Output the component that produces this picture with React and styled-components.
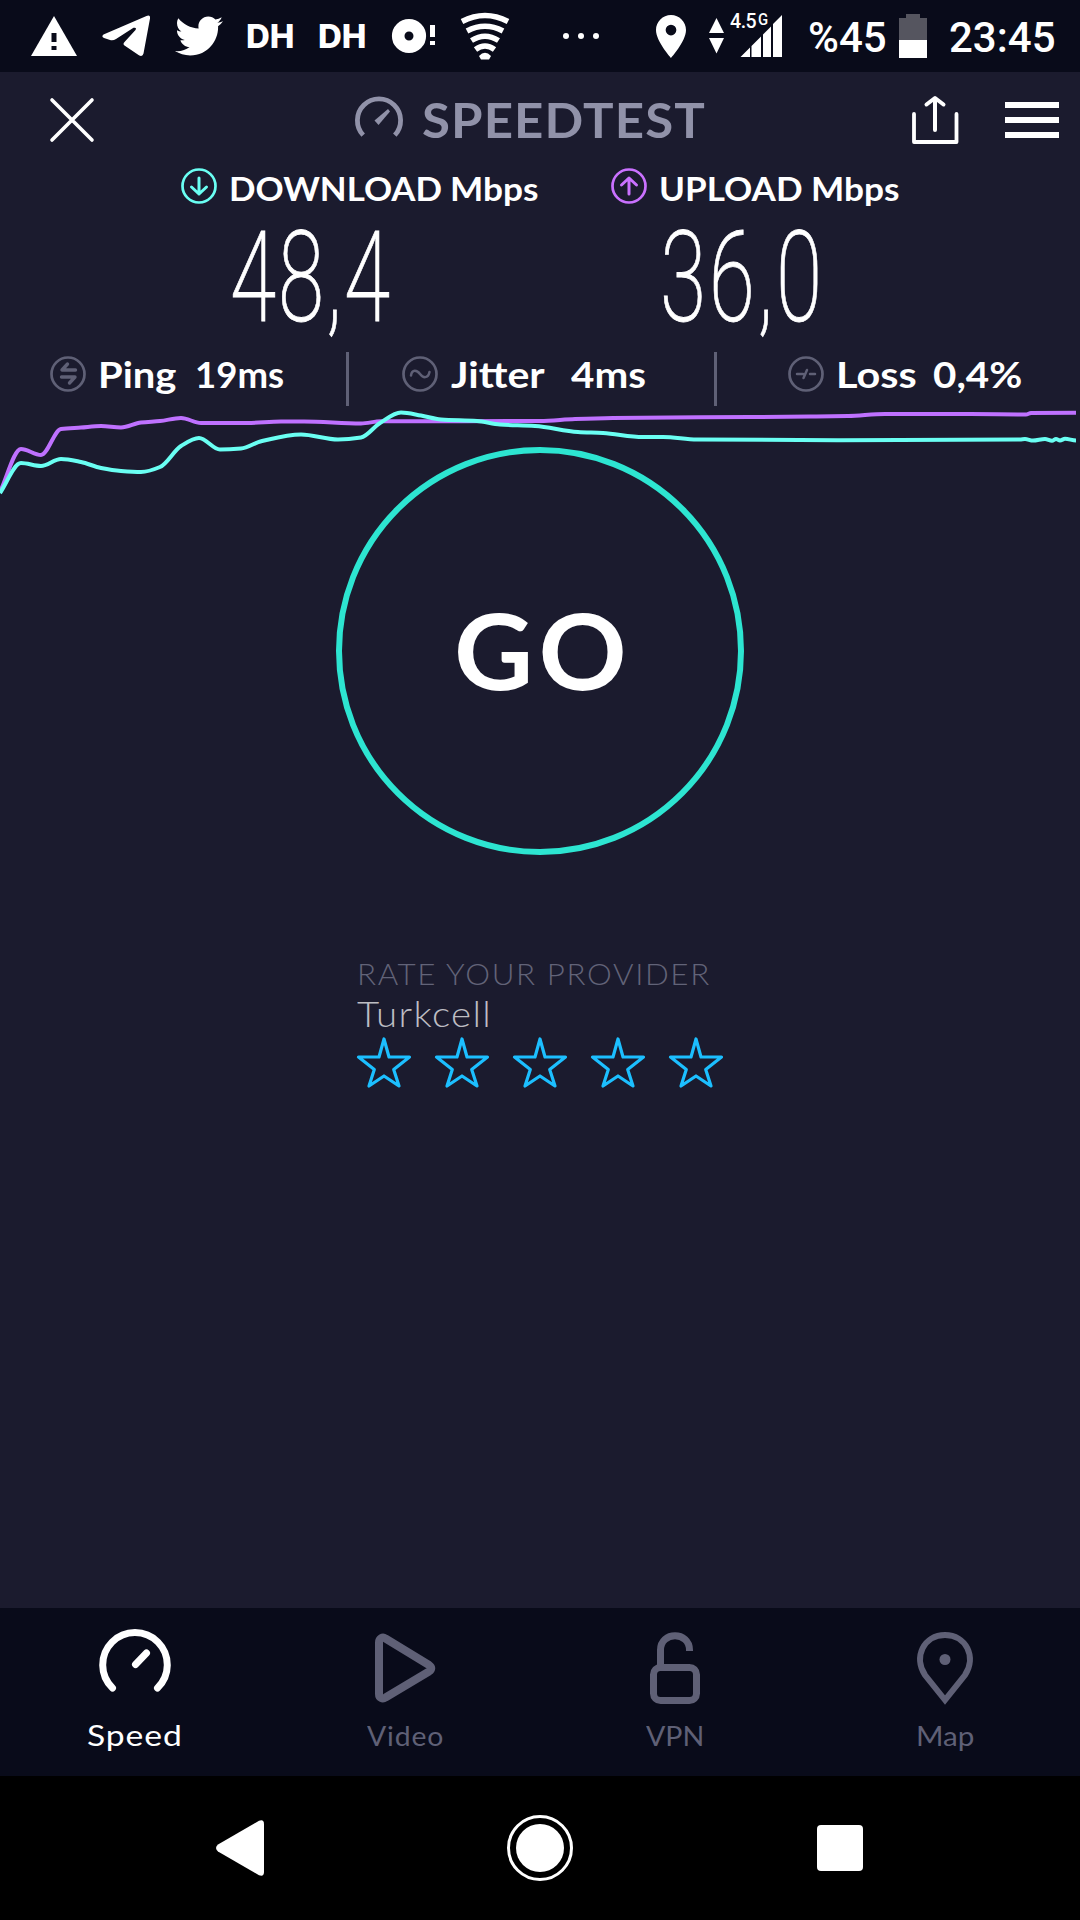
import React from 'react';
import styled, { createGlobalStyle } from 'styled-components';
import { FaTwitter } from 'react-icons/fa';

const GlobalStyle = createGlobalStyle`
  * { box-sizing: border-box; }
  body { margin: 0; background: #1b1b2e; }
  svg { display: block; flex: none; overflow: visible; }
`

const Screen = styled.div`
  width: 1080px;
  height: 1920px;
  display: flex;
  flex-direction: column;
  background: #1b1b2e;
  color: #fff;
  font-family: Lato, "Open Sans", sans-serif;
  overflow: hidden;
`

const StatusBar = styled.div`
  height: 72px;
  display: flex;
  align-items: center;
  background: #090b1a;
  font-family: Roboto, sans-serif;
`

const Slot = styled.div`
  flex: none;
  width: ${p => p.$w}px;
  margin-left: ${p => p.$gap || 0}px;
`

// one line of text, stretched sideways from its left edge; $w is the width after stretching
const Text = styled.span`
  display: block;
  flex: none;
  width: ${p => p.$w / (p.$sx || 1)}px;
  margin-left: ${p => p.$gap || 0}px;
  margin-right: ${p => p.$w - p.$w / (p.$sx || 1)}px;
  padding-top: ${p => p.$drop || 0}px;
  font-size: ${p => p.$size}px;
  line-height: ${p => p.$line || p.$size}px;
  font-weight: ${p => p.$weight || 400};
  letter-spacing: ${p => p.$ls || 0}px;
  color: ${p => p.$color || '#fff'};
  white-space: nowrap;
  transform: scaleX(${p => p.$sx || 1});
  transform-origin: 0 50%;
`

const Badge = styled(Text)`
  font-family: Inter, sans-serif;
`

const Digits = styled(Text)`
  font-family: Roboto, sans-serif;
  -webkit-text-stroke: 0.8px #fff;
`

const Header = styled.header`
  height: 96px;
  display: flex;
  align-items: center;
  padding-left: 50px;
`

const Results = styled.section`
  display: flex;
  height: 184px;
`

const Result = styled.div`
  width: ${p => p.$w}px;
  padding-left: ${p => p.$pad}px;
`

const ResultHead = styled.div`
  display: flex;
  align-items: center;
  height: 36px;
`

const Value = styled.div`
  margin: 10px 0 0 ${p => p.$left}px;
  height: 120px;
`

const Stats = styled.section`
  height: 54px;
  display: flex;
`

const Stat = styled.div`
  display: flex;
  align-items: center;
  height: 44px;
  width: ${p => p.$w}px;
  padding-left: ${p => p.$pad}px;
`

const Divider = styled.div`
  width: 3px;
  height: 54px;
  background: #5f6076;
`

const GoButton = styled.button`
  width: 408px;
  height: 408px;
  margin: -49px auto 0;
  padding: 0 0 5px;
  display: flex;
  align-items: center;
  flex: none;
  border: 6px solid #2de5d1;
  border-radius: 50%;
  background: none;
  font-family: inherit;
  text-align: left;
`

const Rate = styled.section`
  margin: 101px 0 0 357px;
  flex: 1;
`

const Stars = styled.div`
  display: flex;
  gap: 24px;
  margin-top: 4px;
`

const Tabs = styled.nav`
  height: 168px;
  display: flex;
  background: #090b1a;
`

const Tab = styled.div`
  width: 270px;
  padding-top: 21px;
  color: ${p => p.$active ? '#fff' : '#5f6076'};
`

const TabLabel = styled.div`
  display: flex;
  height: 40px;
  margin-top: ${p => p.$top}px;
  padding-left: ${p => p.$left}px;
  align-items: center;
`

const SystemNav = styled.div`
  height: 144px;
  background: #000;
  display: flex;
  align-items: center;
`

// ---- chart ----
const upload = [[0,492],[21,449],[41,455],[61,429],[81,427.5],[101,426],[121,427.5],[141,422.5],[160,421],[181,418],[201,423],[247,423],[281,421.5],[304,421.5],[361,423.5],[381,421.3],[540,421],[575,419],[613,418],[750,417],[810,416.5],[848,416],[885,414],[970,414],[1026,414.5],[1031,413],[1076,412.7]];
const download = [[0,493],[21,463],[41,466],[61,459],[81,462],[101,468],[121,471],[141,472],[160,467],[181,446],[199,438],[220,449.5],[241,448.5],[262,441],[301,434.5],[338,439.5],[361,437.5],[380,423],[401,412.5],[421,415.5],[441,419.5],[477,421],[500,424.5],[535,426],[578,432],[603,433],[643,437],[663,437],[697,439.5],[840,440.2],[1020,439.5],[1025,439],[1033,440.6],[1045,439],[1052,440.8],[1056,439],[1060,440.5],[1065,438.8],[1076,440.5]];

const curve = pts => {
  const slope = pts.map((p, i) => {
    if (!i || i === pts.length - 1) return 0;
    const a = (p[1] - pts[i - 1][1]) / (p[0] - pts[i - 1][0]);
    const b = (pts[i + 1][1] - p[1]) / (pts[i + 1][0] - p[0]);
    return a * b <= 0 ? 0 : (2 * a * b) / (a + b);
  });
  slope[0] = (pts[1][1] - pts[0][1]) / (pts[1][0] - pts[0][0]);
  return pts.map((p, i) => {
    if (!i) return `M${p[0]} ${p[1]}`;
    const q = pts[i - 1];
    const h = (p[0] - q[0]) / 3;
    return `C${q[0] + h} ${q[1] + h * slope[i - 1]} ${p[0] - h} ${p[1] - h * slope[i]} ${p[0]} ${p[1]}`;
  }).join('');
};

const Chart = () => (
  <svg width="1080" height="90" viewBox="0 406 1080 90" fill="none" strokeWidth="4">
    <path d={curve(upload)} stroke="#bf71ff" />
    <path d={curve(download)} stroke="#6afff3" />
  </svg>
);

// ---- icons ----
const Warning = () => (
  <svg width="46" height="40" viewBox="31 17 46 40">
    <path d="M54 17L77 57H31Z" fill="#fff" />
    <path d="M51.5 34h5v9h-5zM51.5 47h5v4h-5z" fill="#090b1a" />
  </svg>
);

const Plane = () => (
  <svg width="48" height="42" viewBox="102 17 48 42" fill="#fff">
    <path d="M103.500 36.500L146.500 18Q150.500 16.500 150 20.500L143.500 55.500Q142.500 59.500 138.500 57L124.500 47.500Q122.500 46 124.500 44L135.500 32Q137 29 133.500 29.800L116 41Q113 43 110 42L104 40Q101 38.500 103.500 36.500Z" />
  </svg>
);

const Disc = () => (
  <svg width="43" height="34" viewBox="393 19 43 34" fill="#fff">
    <circle cx="410" cy="36" r="10.8" fill="none" stroke="#fff" strokeWidth="12.6" />
    <path d="M431 25h5v12h-5zM431 41h5v4h-5z" />
  </svg>
);

const Fan = () => (
  <svg width="48" height="48" viewBox="462 11 48 48" fill="none" stroke="#fff" strokeWidth="5.500">
    <path d="M463 20.500Q486 8.500 509 20.500" />
    <path d="M468 30Q486 20.500 504 30" />
    <path d="M472.500 39.500Q486 31 499.500 39.500" />
    <path d="M476.500 48.500Q486 41.500 495.500 48.500" />
    <path d="M480 55Q486 48.500 492 55L490 58.500H482Z" fill="#fff" stroke="none" />
  </svg>
);

const Dots = () => (
  <svg width="36" height="6" viewBox="564 33 36 6" fill="#fff">
    <circle cx="567" cy="36" r="3" />
    <circle cx="582" cy="36" r="3" />
    <circle cx="597" cy="36" r="3" />
  </svg>
);

const Place = () => (
  <svg width="30" height="43" viewBox="5 2 14 20" preserveAspectRatio="none" fill="#fff">
    <path d="M12 2C8.130 2 5 5.130 5 9c0 5.250 7 13 7 13s7-7.750 7-13c0-3.870-3.130-7-7-7zm0 9.500a2.500 2.500 0 0 1 0-5 2.500 2.500 0 0 1 0 5z" />
  </svg>
);

const DataArrows = () => (
  <svg width="15" height="36" viewBox="0 0 15 36" fill="#fff">
    <path d="M7.500 0L15 15H0ZM0 20H15L7.500 35.500Z" />
  </svg>
);

const SignalBox = styled.div`
  position: relative;
  width: 52px;
  height: 72px;
  margin-left: 6px;
`

const SignalTag = styled.span`
  position: absolute;
  left: 0;
  top: 11px;
  font-size: 21px;
  line-height: 21px;
  font-weight: 500;
  letter-spacing: -0.5px;
  white-space: nowrap;
  transform: scaleX(.93);
  transform-origin: 0 0;
  & small { font-size: 16px; position: relative; top: -3px; left: 2px; }
`

const Signal = () => (
  <SignalBox>
    <svg width="52" height="72" viewBox="730 0 52 72" fill="#fff">
      <path d="M740.500 57L750 47.500V57ZM751.500 46L761 36.500V57H751.500ZM763 34.500L771 26.500V57H763ZM773 24L782 15V57H773Z" />
    </svg>
    <SignalTag>4.5<small>G</small></SignalTag>
  </SignalBox>
);

const Battery = () => (
  <svg width="28" height="44" viewBox="899 14 28 44">
    <path d="M906 14h14v4h7v22h-28V18h7z" fill="#55555f" />
    <path d="M899 40h28v18h-28z" fill="#fff" />
  </svg>
);

const Close = () => (
  <svg width="44" height="44" viewBox="0 0 44 44" stroke="#fff" strokeWidth="3.6" strokeLinecap="round">
    <path d="M2 2L42 42M42 2L2 42" />
  </svg>
);

const Gauge = () => (
  <svg width="48" height="48" viewBox="355 96 48 48">
    <path d="M363.200 135.200A21.600 21.600 0 1 1 394.800 135.200" fill="none" stroke="#9192a9" strokeWidth="4.800" />
    <path d="M388 109L390 111.500L378.500 125L374.500 120.500Z" fill="#9192a9" />
  </svg>
);

const Share = () => (
  <svg width="47" height="48" viewBox="912 96 47 48" fill="none" stroke="#fff" strokeWidth="4" strokeLinecap="round" strokeLinejoin="round">
    <path d="M914 114V142H956.500V114" strokeWidth="3.800" />
    <path d="M935 130V98.500M926.500 104.500L935 98L943.500 104.500" />
  </svg>
);

const Menu = () => (
  <svg width="54" height="36" viewBox="0 0 54 36" fill="#fff">
    <path d="M0 0h54v6H0zM0 15h54v6H0zM0 30h54v6H0z" />
  </svg>
);

const Ring = ({ color, children }) => (
  <svg width="36" height="36" viewBox="0 0 36 36" fill="none" stroke={color} strokeWidth="3" strokeLinecap="round" strokeLinejoin="round">
    <circle cx="18" cy="18" r="16.500" strokeWidth="2.700" />
    {children}
  </svg>
);

const Star = () => (
  <svg width="54" height="51" viewBox="357 1038 54 51" fill="none" stroke="#1cbfff" strokeWidth="3.200" strokeLinejoin="round">
    <path d="M384 1039L389 1057H409.500L393.700 1069.500L399 1086L384 1076L369 1086L374.300 1069.500L358.500 1057H379Z" />
  </svg>
);

const TabIcon = ({ children }) => (
  <svg width="270" height="80" viewBox="0 1629 270 80" fill="none" stroke="currentColor">{children}</svg>
);

const App = () => {
  return (
    <Screen>
      <GlobalStyle />
      <StatusBar>
        <Slot $w={46} $gap={31}><Warning /></Slot>
        <Slot $w={48} $gap={25}><Plane /></Slot>
        <Slot $w={48} $gap={25}><FaTwitter size={48} /></Slot>
        <Badge $w={46} $gap={23} $drop={2} $size={32} $weight={800} $sx={1.03}>DH</Badge>
        <Badge $w={46} $gap={26} $drop={2} $size={32} $weight={800} $sx={1.03}>DH</Badge>
        <Slot $w={43} $gap={28}><Disc /></Slot>
        <Slot $w={48} $gap={26}><Fan /></Slot>
        <Slot $w={36} $gap={54}><Dots /></Slot>
        <Slot $w={30} $gap={57}><Place /></Slot>
        <Slot $w={15} $gap={23}><DataArrows /></Slot>
        <Signal />
        <Text $w={77} $gap={26} $drop={3} $size={42} $weight={500}>%45</Text>
        <Slot $w={28} $gap={14}><Battery /></Slot>
        <Text $w={108} $gap={22} $drop={3} $size={42} $weight={500}>23:45</Text>
      </StatusBar>

      <Header>
        <Close />
        <Slot $w={48} $gap={261}><Gauge /></Slot>
        <Text $w={285} $gap={19} $size={47} $weight={700} $ls={1} $color="#9192a9" $sx={1.085}>SPEEDTEST</Text>
        <Slot $w={47} $gap={205}><Share /></Slot>
        <Slot $w={54} $gap={46}><Menu /></Slot>
      </Header>

      <Results>
        <Result $w={430} $pad={181}>
          <ResultHead>
            <Ring color="#6afff3"><path d="M18 10V26M10.500 19L18 26L25.500 19" /></Ring>
            <Text $w={218} $gap={12} $drop={5} $size={32} $weight={700} $sx={1.09}>DOWNLOAD</Text>
            <Text $w={90} $gap={3} $drop={5} $size={32} $weight={700} $sx={1.1}>Mbps</Text>
          </ResultHead>
          <Value $left={49}><Digits $w={160} $size={127} $weight={200} $ls={3} $sx={0.66}>48,4</Digits></Value>
        </Result>
        <Result $w={650} $pad={181}>
          <ResultHead>
            <Ring color="#ca71ff"><path d="M18 26V10M10.500 17L18 10L25.500 17" /></Ring>
            <Text $w={149} $gap={12} $drop={5} $size={32} $weight={700} $sx={1.095}>UPLOAD</Text>
            <Text $w={90} $gap={3} $drop={5} $size={32} $weight={700} $sx={1.1}>Mbps</Text>
          </ResultHead>
          <Value $left={49}><Digits $w={160} $size={127} $weight={200} $ls={4} $sx={0.66}>36,0</Digits></Value>
        </Result>
      </Results>

      <Stats>
        <Stat $w={346} $pad={50}>
          <Ring color="#5f6076">
            <path d="M17.500 8L12 14H25.500M11.500 21H25L19.500 27" strokeWidth="3.400" />
          </Ring>
          <Text $w={84} $gap={12} $size={36} $weight={700} $sx={1.11}>Ping</Text>
          <Text $w={90} $gap={13} $size={36} $weight={700} $sx={1.015}>19ms</Text>
        </Stat>
        <Divider />
        <Stat $w={365} $pad={53}>
          <Ring color="#5f6076"><path d="M9 19.500C10 13 15 14 18 18S26 23 27.500 16" strokeWidth="2.500" /></Ring>
          <Text $w={107} $gap={13} $size={36} $weight={700} $sx={1.14}>Jitter</Text>
          <Text $w={76} $gap={13} $size={36} $weight={700} $sx={1.12}>4ms</Text>
        </Stat>
        <Divider />
        <Stat $w={363} $pad={71}>
          <Ring color="#5f6076"><path d="M9 18H15M15.500 22L19 14M22 18H27" strokeWidth="2.500" /></Ring>
          <Text $w={86} $gap={12} $size={36} $weight={700} $sx={1.15}>Loss</Text>
          <Text $w={90} $gap={11} $size={36} $weight={700} $sx={1.12}>0,4%</Text>
        </Stat>
      </Stats>

      <Chart />

      <GoButton>
        <Text $w={170} $gap={112} $size={106} $weight={700} $ls={5} $sx={1.03}>GO</Text>
      </GoButton>

      <Rate>
        <Text $w={360} $size={29} $line={36} $weight={300} $ls={1.5} $color="#626378" $sx={1.08}>RATE YOUR PROVIDER</Text>
        <Text $w={140} $size={35} $line={42} $weight={300} $ls={1.2} $color="#bdbdc3" $sx={1.1}>Turkcell</Text>
        <Stars>
          {[1, 2, 3, 4, 5].map(n => <Star key={n} />)}
        </Stars>
      </Rate>

      <Tabs>
        <Tab $active>
          <TabIcon>
            <path d="M112.500 1688A32.300 32.300 0 1 1 157.500 1688M135.500 1664.500L146.500 1653" strokeWidth="7" strokeLinecap="round" />
          </TabIcon>
          <TabLabel $top={5} $left={87}><Text $w={94} $size={29} $ls={0.8} $sx={1.16}>Speed</Text></TabLabel>
        </Tab>
        <Tab>
          <TabIcon>
            <path d="M109 1642.500V1694C109 1698 112.500 1699.500 115.500 1697.500L159 1671.500C162 1669.500 162 1667 159 1665L115.500 1638.500C112.500 1636.500 109 1638.500 109 1642.500Z" strokeWidth="8" strokeLinejoin="round" />
          </TabIcon>
          <TabLabel $top={7} $left={97}><Text $w={77} $size={26} $ls={0.8} $color="#5f6076" $sx={1.09}>Video</Text></TabLabel>
        </Tab>
        <Tab>
          <TabIcon>
            <rect x="113.500" y="1667.500" width="43" height="33" rx="7" strokeWidth="7" />
            <path d="M120.500 1667V1650C120.500 1631 149.500 1631 149.500 1650V1651" strokeWidth="7" />
          </TabIcon>
          <TabLabel $top={7} $left={106}><Text $w={58} $size={26} $color="#5f6076" $sx={1.1}>VPN</Text></TabLabel>
        </Tab>
        <Tab>
          <TabIcon>
            <path d="M135 1700L115 1675C103 1657 114 1635 135 1635S167 1657 155 1675Z" strokeWidth="6" />
            <circle cx="135" cy="1659.500" r="5.500" fill="currentColor" stroke="none" />
          </TabIcon>
          <TabLabel $top={7} $left={106}><Text $w={58} $size={26} $color="#5f6076" $sx={1.14}>Map</Text></TabLabel>
        </Tab>
      </Tabs>

      <SystemNav>
        <Slot $w={48} $gap={216}>
          <svg width="48" height="56" viewBox="0 0 48 56" fill="#fff"><path d="M2 24.500L43 .8Q48-1 48 4V52Q48 57 43 55.200L2 31.500Q-2 28 2 24.500Z" /></svg>
        </Slot>
        <Slot $w={66} $gap={243}>
          <svg width="66" height="66" viewBox="0 0 66 66">
            <circle cx="33" cy="33" r="31.500" fill="none" stroke="#fff" strokeWidth="3" />
            <circle cx="33" cy="33" r="24" fill="#fff" />
          </svg>
        </Slot>
        <Slot $w={46} $gap={244}>
          <svg width="46" height="46" viewBox="0 0 46 46"><rect width="46" height="46" rx="4" fill="#fff" /></svg>
        </Slot>
      </SystemNav>
    </Screen>
  )
}

export default App;
